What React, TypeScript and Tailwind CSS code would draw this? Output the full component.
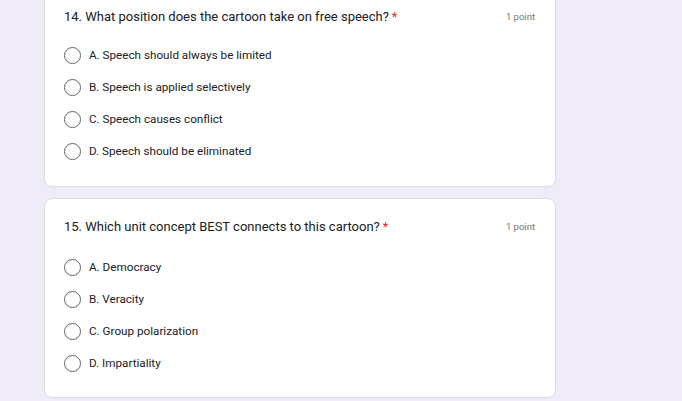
const questions = [
    {
        title: '14. What position does the cartoon take on free speech?',
        options: [
            'A. Speech should always be limited',
            'B. Speech is applied selectively',
            'C. Speech causes conflict',
            'D. Speech should be eliminated',
        ],
    },
    {
        title: '15. Which unit concept BEST connects to this cartoon?',
        options: ['A. Democracy', 'B. Veracity', 'C. Group polarization', 'D. Impartiality'],
    },
];

const Radio = () => (
    <span className="block w-[17px] h-[17px] rounded-full border-[1.5px] border-[#5f6368] shrink-0" />
);

const QuestionCard = ({ title, options, first }: { title: string; options: string[]; first?: boolean }) => (
    <div
        className={`w-[512px] bg-white rounded-lg border border-[#dadce0] px-[19px] pb-[25px] ${
            first ? 'mt-[-13px] pt-[20px] pb-[26px]' : 'mt-[11px] pt-[19px] pb-[25px]'
        }`}
    >
        <div className="flex justify-between items-start">
            <div className="text-[13px] leading-[18px] text-[#202124]">
                {title}
                <span className="text-[#d93025] ml-[3px]">*</span>
            </div>
            <div className="text-[9.5px] leading-[18px] text-[#70757a] pr-[1px]">1 point</div>
        </div>
        <div className={`flex flex-col gap-[15px] ${first ? 'mt-[21px]' : 'mt-[23px]'}`}>
            {options.map((opt) => (
                <div key={opt} className="flex items-center gap-[8px] h-[17px]">
                    <Radio />
                    <span className="text-[11.7px] text-[#202124]">{opt}</span>
                </div>
            ))}
        </div>
    </div>
);

export default function App() {
    return (
        <div
            className="w-[682px] h-[401px] overflow-hidden bg-[#f0ebf8] pl-[44px]"
            style={{ fontFamily: 'Roboto, "Liberation Sans", sans-serif' }}
        >
            {questions.map((q, i) => (
                <QuestionCard key={q.title} title={q.title} options={q.options} first={i === 0} />
            ))}
        </div>
    );
}
